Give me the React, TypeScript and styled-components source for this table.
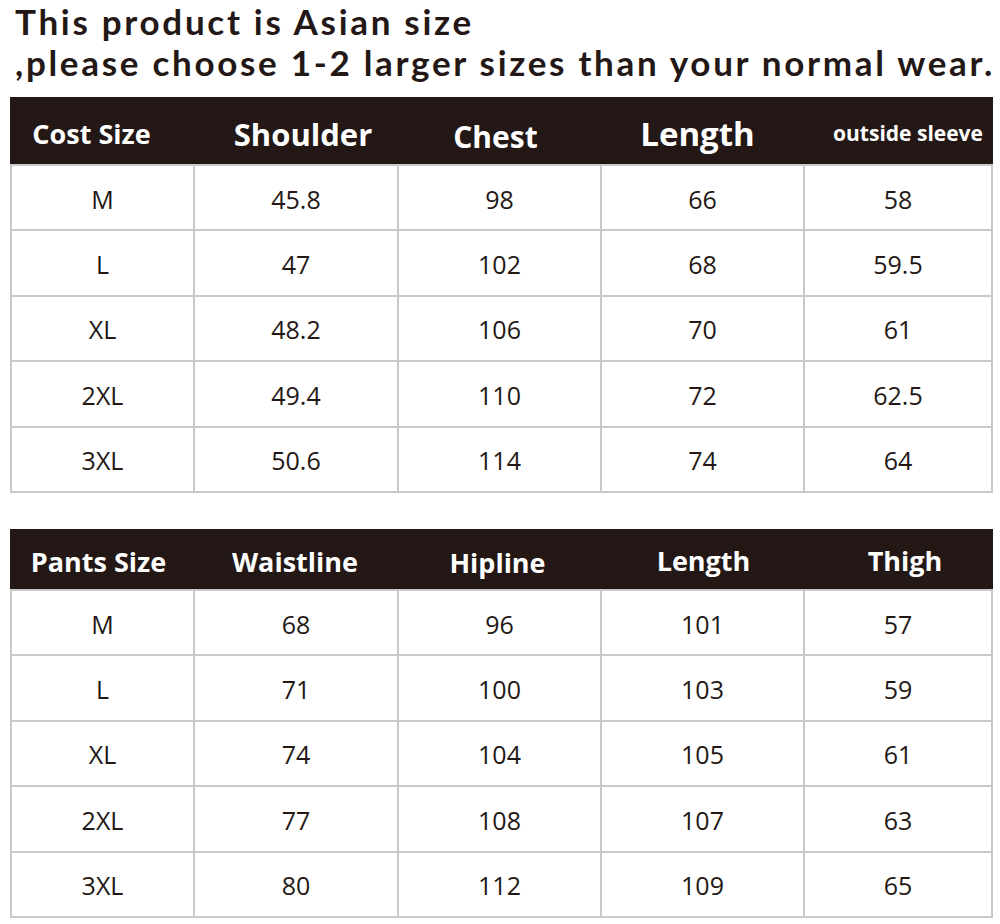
import React from "react";
import styled, { createGlobalStyle } from "styled-components";

const Global = createGlobalStyle`
  html, body {
    margin: 0;
    padding: 0;
    background: #ffffff;
  }
  body {
    font-family: "Open Sans", "Noto Sans", sans-serif;
    color: #231815;
  }
`;

const Page = styled.div`
  width: 1000px;
  height: 924px;
  overflow: hidden;
  display: flex;
  flex-direction: column;
`;

const Title = styled.h1`
  box-sizing: border-box;
  margin: 0;
  padding: 1px 0 0 15px;
  height: 97px;
  font-family: Lato, "Open Sans", sans-serif;
  font-size: 35px;
  line-height: 41px;
  font-weight: 700;
  letter-spacing: 2.7px;
  color: #231815;
  white-space: nowrap;
`;

const Sheet = styled.div<{ $headHeight: number }>`
  margin-left: 10px;
  width: 983px;
  display: grid;
  grid-template-columns: 185px 204px 203px 203px 188px;
  grid-template-rows: ${({ $headHeight }) => $headHeight}px repeat(5, 65.4px);
`;

const Gap = styled.div`
  height: 36px;
`;

const HeadCell = styled.div<{ $size: number; $dy?: number; $dx?: number }>`
  background: #231815;
  color: #ffffff;
  font-weight: 700;
  font-size: ${({ $size }) => $size}px;
  display: flex;
  align-items: center;
  justify-content: center;
  padding-top: ${({ $dy = 0 }) => $dy}px;
  padding-left: ${({ $dx = 0 }) => ($dx > 0 ? $dx * 2 : 0)}px;
  padding-right: ${({ $dx = 0 }) => ($dx < 0 ? -$dx * 2 : 0)}px;
  white-space: nowrap;
  border-bottom: 2px solid #c9c9c9;
`;

const Cell = styled.div<{ $first?: boolean }>`
  box-sizing: border-box;
  border-right: 2px solid #c9c9c9;
  border-bottom: 2px solid #c9c9c9;
  border-left: ${({ $first }) => ($first ? "2px solid #c9c9c9" : "none")};
  display: flex;
  align-items: center;
  justify-content: center;
  padding-top: 2px;
  font-size: 25px;
  color: #231815;
`;

type Head = { label: string; size: number; dy?: number; dx?: number };

const SizeSheet = ({
  heads,
  headHeight,
  rows,
}: {
  heads: Head[];
  headHeight: number;
  rows: string[][];
}) => (
  <Sheet $headHeight={headHeight}>
    {heads.map((h) => (
      <HeadCell key={h.label} $size={h.size} $dy={h.dy} $dx={h.dx}>
        {h.label}
      </HeadCell>
    ))}
    {rows.map((r) =>
      r.map((v, i) => (
        <Cell key={r[0] + i} $first={i === 0}>
          {v}
        </Cell>
      ))
    )}
  </Sheet>
);

const topHeads: Head[] = [
  { label: "Cost Size", size: 27, dy: 6, dx: -11 },
  { label: "Shoulder", size: 31, dy: 6, dx: 6 },
  { label: "Chest", size: 30, dy: 12, dx: -5 },
  { label: "Length", size: 33, dy: 6, dx: -6 },
  { label: "outside sleeve", size: 21, dy: 4, dx: 9 },
];

const topRows = [
  ["M", "45.8", "98", "66", "58"],
  ["L", "47", "102", "68", "59.5"],
  ["XL", "48.2", "106", "70", "61"],
  ["2XL", "49.4", "110", "72", "62.5"],
  ["3XL", "50.6", "114", "74", "64"],
];

const pantsHeads: Head[] = [
  { label: "Pants Size", size: 27, dy: 6, dx: -4 },
  { label: "Waistline", size: 27, dy: 6, dx: -2 },
  { label: "Hipline", size: 27, dy: 8, dx: -3 },
  { label: "Length", size: 27, dy: 4 },
  { label: "Thigh", size: 27, dy: 4, dx: 6 },
];

const pantsRows = [
  ["M", "68", "96", "101", "57"],
  ["L", "71", "100", "103", "59"],
  ["XL", "74", "104", "105", "61"],
  ["2XL", "77", "108", "107", "63"],
  ["3XL", "80", "112", "109", "65"],
];

export default function App() {
  return (
    <Page>
      <Global />
      <Title>
        This product is Asian size
        <br />
        ,please choose 1-2 larger sizes than your normal wear.
      </Title>
      <SizeSheet heads={topHeads} headHeight={69} rows={topRows} />
      <Gap />
      <SizeSheet heads={pantsHeads} headHeight={62} rows={pantsRows} />
    </Page>
  );
}
